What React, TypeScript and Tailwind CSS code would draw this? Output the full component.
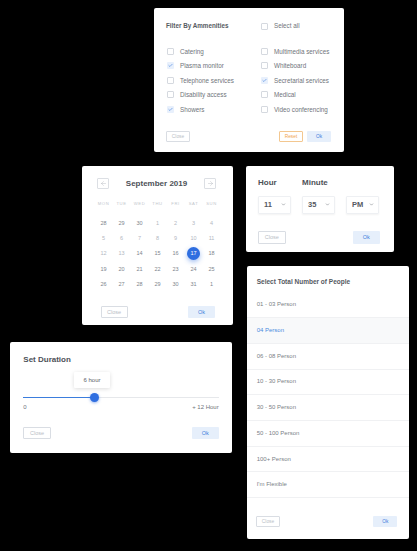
import { ArrowLeft, ArrowRight, Check, ChevronDown } from "lucide-react";

const amenities: [string, boolean, string, boolean][] = [
  ["Catering", false, "Multimedia services", false],
  ["Plasma monitor", true, "Whiteboard", false],
  ["Telephone services", false, "Secretarial services", true],
  ["Disability access", false, "Medical", false],
  ["Showers", true, "Video conferencing", false],
];

const weekDays = ["MON", "TUE", "WED", "THU", "FRI", "SAT", "SUN"];

const weeks = [
  [28, 29, 30, 1, 2, 3, 4],
  [5, 6, 7, 8, 9, 10, 11],
  [12, 13, 14, 15, 16, 17, 18],
  [19, 20, 21, 22, 23, 24, 25],
  [26, 27, 28, 29, 30, 31, 1],
];

const people = [
  "01 - 03 Person",
  "04 Person",
  "06 - 08 Person",
  "10 - 30 Person",
  "30 - 50 Person",
  "50 - 100 Person",
  "100+ Person",
  "I'm Flexible",
];

const Box = ({ checked }: { checked: boolean }) =>
  checked ? (
    <span className="flex items-center justify-center w-[7px] h-[7px] rounded-[1px] bg-[#e8f0fc]">
      <Check size={5} strokeWidth={3} className="text-[#4a86e0]" />
    </span>
  ) : (
    <span className="w-[7px] h-[7px] rounded-[1px] border border-[#d5d9df] bg-white" />
  );

const CloseBtn = ({ className }: { className: string }) => (
  <div className={`flex items-center justify-center border border-[#d9dde3] rounded-[1px] text-[#b9bec6] ${className}`}>
    Close
  </div>
);

const OkBtn = ({ className }: { className: string }) => (
  <div className={`flex items-center justify-center rounded-[1px] bg-[#e6effb] text-[#3f7fdc] ${className}`}>Ok</div>
);

// filtro de amenidades
const Amenities = () => (
  <div className="ml-[154px] w-[190px] h-[144px] bg-white rounded-[2px] pt-[13px] pl-[12px] pr-[13px]">
    <div className="flex h-[10px] items-center">
      <span className="w-[95px] text-[6.3px] font-bold text-[#555a61]">Filter By Ammenities</span>
      <Box checked={false} />
      <span className="ml-[6px] text-[6.3px] text-[#6f747b]">Select all</span>
    </div>
    <div className="mt-[13px] pl-px">
      {amenities.map(([a, ac, b, bc]) => (
        <div key={a} className="flex h-[14.5px] items-center">
          <div className="flex w-[94px] items-center gap-[6px]">
            <Box checked={ac} />
            <span className="text-[6.3px] text-[#6f747b]">{a}</span>
          </div>
          <div className="flex items-center gap-[6px]">
            <Box checked={bc} />
            <span className="text-[6.3px] text-[#6f747b]">{b}</span>
          </div>
        </div>
      ))}
    </div>
    <div className="mt-[14.5px] flex items-center">
      <CloseBtn className="w-[24px] h-[11px] text-[4.8px]" />
      <div className="ml-auto flex items-center justify-center w-[24px] h-[11px] border border-[#f3c790] rounded-[1px] text-[#f0a452] text-[4.8px]">
        Reset
      </div>
      <OkBtn className="ml-[4px] w-[24px] h-[11px] text-[4.8px]" />
    </div>
  </div>
);

const Calendar = () => (
  <div className="w-[151px] h-[159px] bg-white rounded-[2px] pt-[12px]">
    <div className="flex h-[11px] items-center justify-between pl-[15px] pr-[17px]">
      <span className="flex w-[12px] h-[11px] items-center justify-center border border-[#dcdfe4] rounded-[1px]">
        <ArrowLeft size={7} strokeWidth={1.3} className="text-[#a8adb5]" />
      </span>
      <span className="text-[8px] font-bold text-[#4d5157]">September 2019</span>
      <span className="flex w-[12px] h-[11px] items-center justify-center border border-[#dcdfe4] rounded-[1px]">
        <ArrowRight size={7} strokeWidth={1.3} className="text-[#a8adb5]" />
      </span>
    </div>
    <div className="mt-[11px] px-[12.5px] grid grid-cols-7 h-[8px] items-center">
      {weekDays.map((d) => (
        <span key={d} className="text-center text-[4.2px] tracking-[0.6px] text-[#c3c7cd]">
          {d}
        </span>
      ))}
    </div>
    <div className="mt-[7px] px-[12.5px]">
      {weeks.map((w, i) => (
        <div key={i} className="grid grid-cols-7 h-[15.4px] items-center">
          {w.map((d, j) => {
            const current = !(i === 0 && d > 20) && !(i === 4 && d < 7);
            const light = current && d < 14;
            if (d === 17 && i === 2)
              return (
                <span key={j} className="flex justify-center">
                  <span className="flex w-[13px] h-[13px] items-center justify-center rounded-full bg-[#2f6ee0] text-white text-[5.5px] shadow-[0_2px_5px_rgba(47,110,224,0.45)]">
                    17
                  </span>
                </span>
              );
            return (
              <span key={j} className={`text-center text-[5.5px] ${light ? "text-[#b3b8bf]" : "text-[#80858d]"}`}>
                {d}
              </span>
            );
          })}
        </div>
      ))}
    </div>
    <div className="mt-[14px] flex justify-between pl-[18.5px] pr-[18px]">
      <CloseBtn className="w-[27px] h-[12px] text-[5.5px]" />
      <OkBtn className="w-[27px] h-[12px] text-[5.5px]" />
    </div>
  </div>
);

const Select = ({ value }: { value: string }) => (
  <div className="flex w-[32.5px] h-[18.6px] items-center pl-[5px] pr-[4px] border border-[#eef0f3] rounded-[1px] shadow-[0_1px_2px_rgba(0,0,0,0.05)]">
    <span className="text-[7.5px] font-bold text-[#55595f]">{value}</span>
    <ChevronDown size={5} strokeWidth={2.5} className="ml-auto text-[#6b7077]" />
  </div>
);

const TimePicker = () => (
  <div className="w-[148px] h-[86px] bg-white rounded-[2px] pt-[12px] px-[12px]">
    <div className="flex h-[10px] items-center text-[8px] font-bold text-[#4d5157]">
      <span className="w-[44px]">Hour</span>
      <span>Minute</span>
    </div>
    <div className="mt-[7.5px] flex gap-[11.5px]">
      <Select value="11" />
      <Select value="35" />
      <Select value="PM" />
    </div>
    <div className="mt-[16.5px] flex justify-between pr-[2px]">
      <CloseBtn className="w-[27.5px] h-[13px] text-[5.5px]" />
      <OkBtn className="w-[27.5px] h-[13px] text-[5.5px]" />
    </div>
  </div>
);

const Duration = () => (
  <div className="mr-px w-[222px] h-[111px] bg-white rounded-[2px] pt-[13px] px-[13.3px]">
    <div className="h-[10px] flex items-center text-[8px] font-bold text-[#4d5157]">Set Duration</div>
    <div className="mt-[7.3px] ml-[50.7px] flex w-[36px] h-[16px] items-center justify-center bg-white rounded-[1px] shadow-[0_1px_4px_rgba(0,0,0,0.14)] text-[6px] text-[#5d6168]">
      6 hour
    </div>
    <div className="relative mt-[4.5px] h-[9px] flex items-center">
      <div className="h-[1.5px] w-[71px] bg-[#3b7ddd]" />
      <div className="h-[1.5px] flex-1 bg-[#e6e8eb]" />
      <span className="absolute left-[66.5px] top-0 w-[9px] h-[9px] rounded-full bg-[#2f6ee0] shadow-[0_1px_3px_rgba(47,110,224,0.5)]" />
    </div>
    <div className="mt-[2.2px] h-[8px] flex items-center justify-between text-[6px] text-[#6f747b]">
      <span>0</span>
      <span>+ 12 Hour</span>
    </div>
    <div className="mt-[15.3px] flex justify-between">
      <CloseBtn className="w-[27.5px] h-[12px] text-[5.5px]" />
      <OkBtn className="w-[27px] h-[12px] text-[5.5px]" />
    </div>
  </div>
);

const People = () => (
  <div className="ml-px w-[162px] h-[273px] bg-white rounded-[2px] pt-[10.7px]">
    <div className="h-[10px] px-[9.7px] flex items-center text-[6.5px] font-bold text-[#55595f]">
      Select Total Number of People
    </div>
    <div className="mt-[5.9px]">
      {people.map((p, i) => (
        <div
          key={p}
          className={`h-[25.7px] flex items-center px-[9.7px] border-b border-[#f0f1f3] text-[6px] ${
            i === 1 ? "bg-[#f8f9fa] text-[#4a8be0]" : "text-[#7a7f87]"
          }`}
        >
          {p}
        </div>
      ))}
    </div>
    <div className="mt-[17.8px] flex justify-between pl-[9px] pr-[11.7px]">
      <CloseBtn className="w-[24px] h-[11.3px] text-[4.8px]" />
      <OkBtn className="w-[24px] h-[11.3px] text-[4.8px]" />
    </div>
  </div>
);

export default function App() {
  return (
    <div className="w-[417px] h-[551px] bg-black pt-[8px] overflow-hidden font-['Liberation_Sans',Arial,sans-serif]">
      <Amenities />
      <div className="mt-[14px] flex">
        <div className="w-[233px] flex flex-col items-end">
          <Calendar />
          <div className="mt-[17px]">
            <Duration />
          </div>
        </div>
        <div className="ml-[13px] flex flex-col items-start">
          <TimePicker />
          <div className="mt-[14px]">
            <People />
          </div>
        </div>
      </div>
    </div>
  );
}
